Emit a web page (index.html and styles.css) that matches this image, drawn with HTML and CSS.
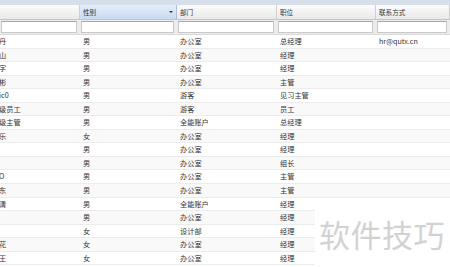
FILE: index.html
```html
<!DOCTYPE html>
<html lang="zh">
<head>
<meta charset="utf-8">
<link rel="stylesheet" href="styles.css">
</head>
<body>
<div class="grid">
  <div class="topbar"></div>
  <div class="row head">
    <div class="hc"></div>
    <div class="hc active">性别<span class="arrow"></span></div>
    <div class="hc">部门</div>
    <div class="hc">职位</div>
    <div class="hc">联系方式</div>
  </div>
  <div class="row filter">
    <div class="fc"><div class="inp"></div></div>
    <div class="fc"><div class="inp"></div></div>
    <div class="fc"><div class="inp"></div></div>
    <div class="fc"><div class="inp"></div></div>
    <div class="fc"><div class="inp"></div></div>
  </div>
  <div class="body">
    <div class="row dr"><div class="c first">丹</div><div class="c">男</div><div class="c">办公室</div><div class="c">总经理</div><div class="c">hr@qutx.cn</div></div>
    <div class="row dr"><div class="c first">山</div><div class="c">男</div><div class="c">办公室</div><div class="c">经理</div><div class="c"></div></div>
    <div class="row dr"><div class="c first">字</div><div class="c">男</div><div class="c">办公室</div><div class="c">经理</div><div class="c"></div></div>
    <div class="row dr"><div class="c first">彬</div><div class="c">男</div><div class="c">办公室</div><div class="c">主管</div><div class="c"></div></div>
    <div class="row dr"><div class="c first">ic0</div><div class="c">男</div><div class="c">游客</div><div class="c">见习主管</div><div class="c"></div></div>
    <div class="row dr"><div class="c first">级员工</div><div class="c">男</div><div class="c">游客</div><div class="c">员工</div><div class="c"></div></div>
    <div class="row dr"><div class="c first">级主管</div><div class="c">男</div><div class="c">全能账户</div><div class="c">总经理</div><div class="c"></div></div>
    <div class="row dr"><div class="c first">乐</div><div class="c">女</div><div class="c">办公室</div><div class="c">经理</div><div class="c"></div></div>
    <div class="row dr"><div class="c first"></div><div class="c">男</div><div class="c">办公室</div><div class="c">经理</div><div class="c"></div></div>
    <div class="row dr"><div class="c first"></div><div class="c">男</div><div class="c">办公室</div><div class="c">组长</div><div class="c"></div></div>
    <div class="row dr"><div class="c first">O</div><div class="c">男</div><div class="c">办公室</div><div class="c">主管</div><div class="c"></div></div>
    <div class="row dr"><div class="c first">东</div><div class="c">男</div><div class="c">办公室</div><div class="c">主管</div><div class="c"></div></div>
    <div class="row dr"><div class="c first">清</div><div class="c">男</div><div class="c">全能账户</div><div class="c">经理</div><div class="c"></div></div>
    <div class="row dr"><div class="c first"></div><div class="c">男</div><div class="c">办公室</div><div class="c">经理</div><div class="c"></div></div>
    <div class="row dr"><div class="c first"></div><div class="c">女</div><div class="c">设计部</div><div class="c">经理</div><div class="c"></div></div>
    <div class="row dr"><div class="c first">花</div><div class="c">女</div><div class="c">办公室</div><div class="c">经理</div><div class="c"></div></div>
    <div class="row dr"><div class="c first">王</div><div class="c">女</div><div class="c">办公室</div><div class="c">经理</div><div class="c"></div></div>
  </div>
  <div class="watermark">软件技巧</div>
</div>
</body>
</html>
```

FILE: styles.css
```css
html, body {
  margin: 0;
  padding: 0;
  background: #ffffff;
}
body {
  width: 450px;
  height: 267px;
  overflow: hidden;
  font-family: "Noto Sans CJK SC", "Noto Sans", sans-serif;
  color: #333;
}
.grid {
  position: relative;
  width: 450px;
  height: 267px;
  overflow: hidden;
}
.topbar {
  height: 5px;
  background: #d6dfe9;
}
.row {
  display: grid;
  grid-template-columns: 80px 97px 100px 99px 74px;
}
.head {
  height: 15px;
  border-bottom: 1px solid #c5c5c5;
  box-sizing: border-box;
}
.hc {
  position: relative;
  background: linear-gradient(#fbfbfb, #e9e9e9);
  border-right: 1px solid #cfcfcf;
  font-size: 6.6px;
  line-height: 14px;
  padding-left: 3px;
  color: #333;
}
.hc.active {
  background: linear-gradient(#e6eff9, #c8daf0);
  border-right-color: #a9bfdc;
}
.arrow {
  position: absolute;
  right: 3px;
  top: 6px;
  width: 0;
  height: 0;
  border-left: 2px solid transparent;
  border-right: 2px solid transparent;
  border-top: 2.5px solid #333;
}
.filter {
  height: 15px;
  background: #ececec;
  box-sizing: border-box;
  border-bottom: 1px solid #d9d9d9;
}
.fc {
  padding: 1px 3px 1px 1px;
}
.inp {
  height: 12px;
  box-sizing: border-box;
  background: #fff;
  border: 1px solid #c9c9c9;
  border-top-color: #a8a8a8;
}
.dr {
  height: 13.56px;
  box-sizing: border-box;
  border-bottom: 1px solid #ececec;
  font-size: 7.2px;
  line-height: 12.5px;
}
.dr:nth-child(even) {
  background: #f9f9f9;
}
.c {
  padding-left: 3px;
  white-space: nowrap;
  overflow: hidden;
}
.c.first {
  padding-left: 0;
  margin-left: -1px;
}
.watermark {
  position: absolute;
  left: 315px;
  top: 210px;
  width: 135px;
  height: 57px;
  background: #fff;
  color: #d2d2d2;
  font-size: 31px;
  line-height: 48px;
  padding-left: 4px;
  box-sizing: border-box;
  letter-spacing: 0.5px;
}
```
